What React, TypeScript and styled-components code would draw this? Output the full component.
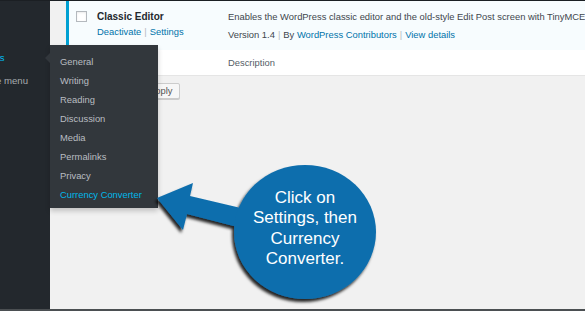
import React from "react";
import styled, { createGlobalStyle } from "styled-components";

const Global = createGlobalStyle`
  html, body { margin: 0; padding: 0; background: #f1f1f1; }
  * { box-sizing: border-box; }
  body { font-family: "Liberation Sans", Arial, sans-serif; }
`;

const Page = styled.div`
  position: relative;
  width: 585px;
  height: 311px;
  overflow: hidden;
  display: flex;
  border-top: 1px solid #1b1f23;
  border-bottom: 2px solid #4b4f52;
  font-family: "Liberation Sans", Arial, sans-serif;
  font-size: 9.4px;
`;

const Sidebar = styled.nav`
  width: 50px;
  flex: none;
  background: #23282d;
  padding-top: 50px;
  display: flex;
  flex-direction: column;
  gap: 9px;
  overflow: hidden;
`;

const SideItem = styled.div<{ $active?: boolean; $shift: number }>`
  line-height: 14px;
  font-size: 9.6px;
  white-space: nowrap;
  color: ${(p) => (p.$active ? "#00b9eb" : "#a7abaf")};
  margin-left: ${(p) => p.$shift}px;
`;

const Main = styled.main`
  flex: 1;
  background: #f1f1f1;
  padding-left: 16px;
  overflow: hidden;
`;

const Table = styled.div`
  width: 560px;
`;

const Row = styled.div<{ $active?: boolean; $height: number }>`
  display: grid;
  grid-template-columns: 31px 131px 1fr;
  height: ${(p) => p.$height}px;
  background: ${(p) => (p.$active ? "#f7fcfe" : "#ffffff")};
  border-bottom: ${(p) => (p.$active ? "none" : "1px solid #e5e5e5")};
`;

const CheckCell = styled.div<{ $active?: boolean; $pt: number }>`
  border-left: 3px solid ${(p) => (p.$active ? "#00a0d2" : "transparent")};
  padding-left: 7px;
  padding-top: ${(p) => p.$pt}px;
`;

const Checkbox = styled.span`
  display: block;
  width: 11px;
  height: 11px;
  border: 1px solid #b4b9be;
  background: #fff;
  box-shadow: inset 0 1px 2px rgba(0, 0, 0, 0.08);
`;

const Cell = styled.div<{ $pt: number }>`
  padding-top: ${(p) => p.$pt}px;
  white-space: nowrap;
  color: #40464d;
`;

const Title = styled.div`
  font-weight: bold;
  font-size: 10px;
  line-height: 14px;
  color: #23282d;
`;

const Line = styled.div<{ $mt?: number }>`
  line-height: 14px;
  margin-top: ${(p) => p.$mt ?? 0}px;
`;

const Link = styled.span`
  color: #0073aa;
`;

const Sep = styled.span`
  color: #b5b9bd;
  margin: 0 3px;
`;

const HeadText = styled.div`
  line-height: 14px;
  color: #555d66;
`;

const Nav = styled.div`
  display: flex;
  gap: 4px;
  margin-top: 7px;
`;

const Select = styled.div`
  width: 71px;
  height: 16px;
  border: 1px solid #ddd;
  background: #fff;
`;

const Button = styled.div`
  height: 16px;
  padding: 0 7px;
  border: 1px solid #cccccc;
  border-radius: 2px;
  background: #f7f7f7;
  color: #555;
  line-height: 14px;
  box-shadow: 0 1px 0 #ccc;
`;

const Flyout = styled.ul`
  position: absolute;
  left: 50px;
  top: 44px;
  width: 108px;
  height: 163px;
  margin: 0;
  padding: 6.5px 0 0 10px;
  list-style: none;
  background: #32373c;
  box-shadow: 0 3px 5px rgba(0, 0, 0, 0.2);
  z-index: 2;
  &::before {
    content: "";
    position: absolute;
    left: -5px;
    top: 8px;
    border-right: 5px solid #32373c;
    border-top: 5px solid transparent;
    border-bottom: 5px solid transparent;
  }
`;

const FlyItem = styled.li<{ $current?: boolean }>`
  line-height: 19px;
  height: 19px;
  font-size: 9.4px;
  color: ${(p) => (p.$current ? "#00b9eb" : "#b9bdc1")};
`;

const Callout = styled.div`
  position: absolute;
  inset: 0;
  z-index: 3;
  pointer-events: none;
`;

const Drawing = styled.svg`
  display: block;
`;

const Bubble = styled.div`
  position: absolute;
  left: 234px;
  top: 162px;
  width: 142px;
  height: 134px;
  display: flex;
  align-items: center;
  justify-content: center;
  padding-bottom: 3px;
  color: #ffffff;
  font-size: 17px;
  line-height: 20.5px;
  text-align: center;
`;

const menu = [
  "General",
  "Writing",
  "Reading",
  "Discussion",
  "Media",
  "Permalinks",
  "Privacy",
  "Currency Converter",
];

export default function App() {
  return (
    <>
      <Global />
      <Page>
        <Sidebar>
          <SideItem $active $shift={-30}>Settings</SideItem>
          <SideItem $shift={-36}>Collapse menu</SideItem>
        </Sidebar>
        <Main>
          <Table>
            <Row $active $height={49}>
              <CheckCell $active $pt={10}>
                <Checkbox />
              </CheckCell>
              <Cell $pt={9}>
                <Title>Classic Editor</Title>
                <Line $mt={1}>
                  <Link>Deactivate</Link>
                  <Sep>|</Sep>
                  <Link>Settings</Link>
                </Line>
              </Cell>
              <Cell $pt={9}>
                <Line>
                  Enables the WordPress classic editor and the old-style Edit Post screen with TinyMCE, Meta Boxes, etc.
                </Line>
                <Line $mt={4}>
                  Version 1.4<Sep>|</Sep>By <Link>WordPress Contributors</Link>
                  <Sep>|</Sep>
                  <Link>View details</Link>
                </Line>
              </Cell>
            </Row>
            <Row $height={26}>
              <CheckCell $pt={7}>
                <Checkbox />
              </CheckCell>
              <Cell $pt={6}>
                <HeadText>Plugin</HeadText>
              </Cell>
              <Cell $pt={6}>
                <HeadText>Description</HeadText>
              </Cell>
            </Row>
          </Table>
          <Nav>
            <Select />
            <Button>Apply</Button>
          </Nav>
        </Main>
        <Flyout>
          {menu.map((m) => (
            <FlyItem key={m} $current={m === "Currency Converter"}>
              {m}
            </FlyItem>
          ))}
        </Flyout>
        <Callout>
          <Drawing width="585" height="311" viewBox="0 -1 585 311">
            <defs>
              <filter id="sh" x="-20%" y="-20%" width="140%" height="140%">
                <feDropShadow dx="-2" dy="3" stdDeviation="1.4" floodColor="#000" floodOpacity="0.85" />
              </filter>
            </defs>
            <g filter="url(#sh)" fill="#0d6ead">
              <polygon points="157,196 193,181 190,194 262,211 257,230 187,212 183,228" />
              <ellipse cx="305" cy="230" rx="71" ry="67" />
            </g>
          </Drawing>
          <Bubble>
            Click on
            <br />
            Settings, then
            <br />
            Currency
            <br />
            Converter.
          </Bubble>
        </Callout>
      </Page>
    </>
  );
}
